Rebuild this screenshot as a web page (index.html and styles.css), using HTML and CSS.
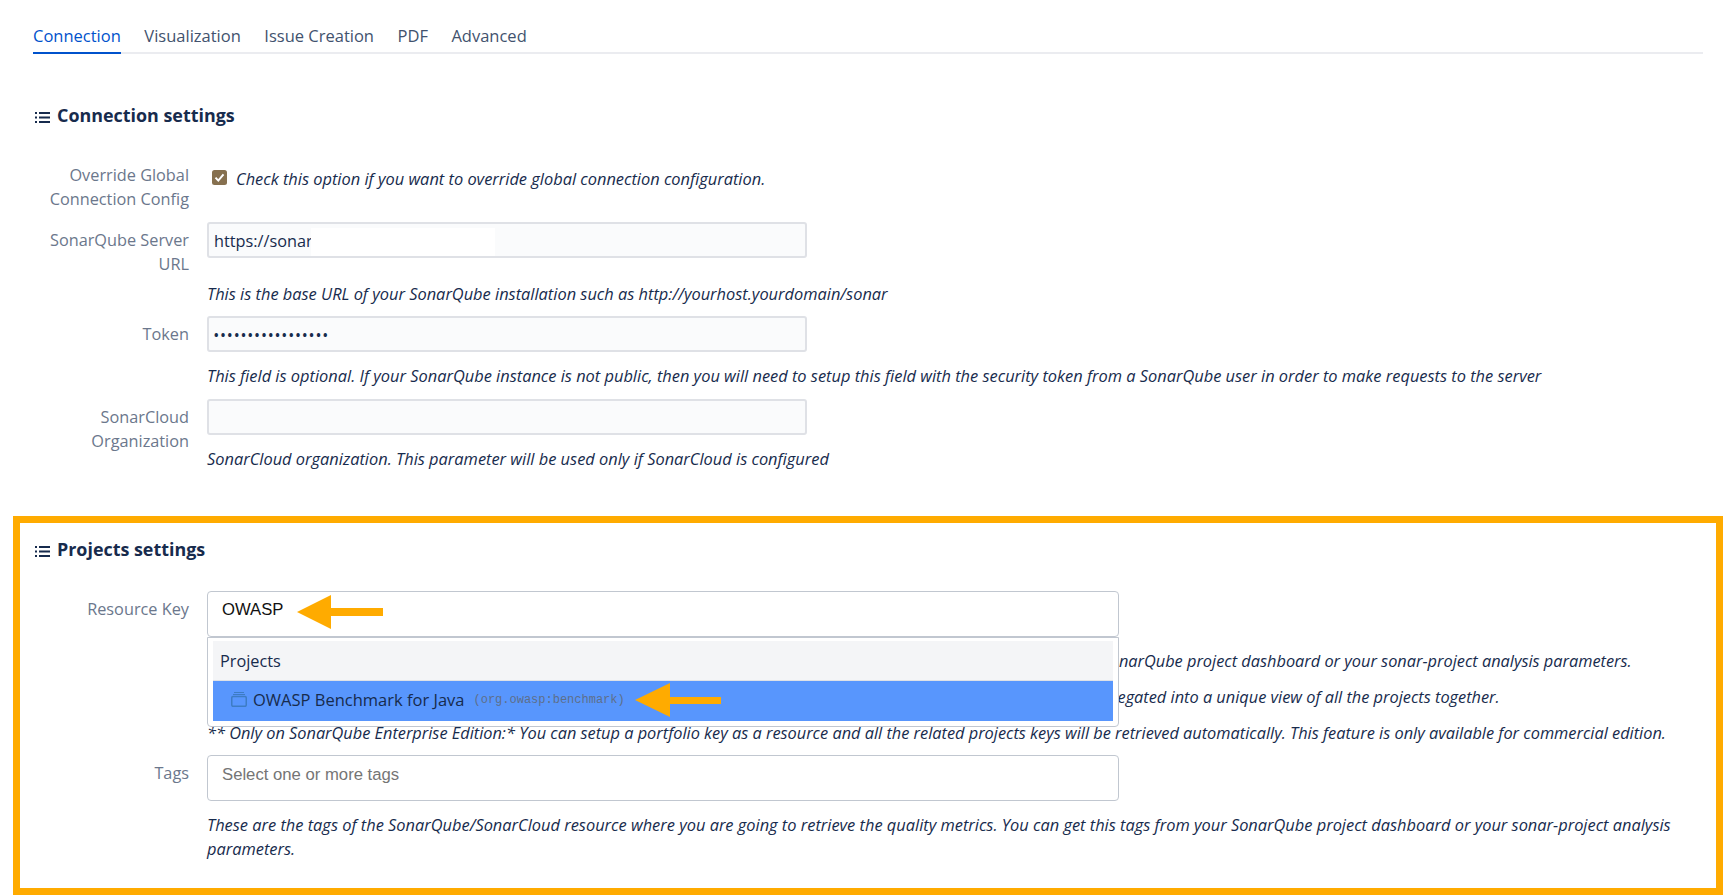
FILE: index.html
```html
<!DOCTYPE html>
<html lang="en">
<head>
<meta charset="utf-8">
<title>SonarQube settings</title>
<link rel="stylesheet" href="styles.css">
</head>
<body>
<nav class="tabs">
  <a class="tab tab-active">Connection</a>
  <a class="tab">Visualization</a>
  <a class="tab">Issue Creation</a>
  <a class="tab">PDF</a>
  <a class="tab">Advanced</a>
</nav>

<section class="section section-connection">
  <h2 class="heading">
    <svg class="heading-icon" viewBox="0 0 15 13" width="15" height="13"><path d="M0 1h2v2H0zM0 5.5h2v2H0zM0 10h2v2H0zM4 1h11v2H4zM4 5.5h11v2H4zM4 10h11v2H4z" fill="#172b4d"/></svg>
    Connection settings
  </h2>
  <div class="row row-first">
    <label class="label">Override Global Connection Config</label>
    <div class="control control-check">
      <svg class="check" viewBox="0 0 15 15" width="15" height="15"><rect width="15" height="15" rx="2.5" fill="#86704f"/><path d="M3.5 7.6l2.8 3L11.5 4.4" fill="none" stroke="#fff" stroke-width="2"/></svg>
      <span class="help help-inline">Check this option if you want to override global connection configuration.</span>
    </div>
  </div>
  <div class="row">
    <label class="label label-field">SonarQube Server URL</label>
    <div class="control">
      <div class="field">https://sonar<span class="redaction"></span></div>
      <p class="help help-far">This is the base URL of your SonarQube installation such as http://yourhost.yourdomain/sonar</p>
    </div>
  </div>
  <div class="row row-token">
    <label class="label label-field">Token</label>
    <div class="control">
      <div class="field field-dots">•••••••••••••••••</div>
      <p class="help">This field is optional. If your SonarQube instance is not public, then you will need to setup this field with the security token from a SonarQube user in order to make requests to the server</p>
    </div>
  </div>
  <div class="row">
    <label class="label label-field">SonarCloud Organization</label>
    <div class="control">
      <div class="field"></div>
      <p class="help">SonarCloud organization. This parameter will be used only if SonarCloud is configured</p>
    </div>
  </div>
</section>

<section class="section section-projects">
  <h2 class="heading">
    <svg class="heading-icon" viewBox="0 0 15 13" width="15" height="13"><path d="M0 1h2v2H0zM0 5.5h2v2H0zM0 10h2v2H0zM4 1h11v2H4zM4 5.5h11v2H4zM4 10h11v2H4z" fill="#172b4d"/></svg>
    Projects settings
  </h2>
  <div class="row row-resource">
    <label class="label label-select">Resource Key</label>
    <div class="control control-select">
      <div class="select select-open">OWASP</div>
      <svg class="arrow arrow-input" viewBox="0 0 86 34" width="86" height="34"><path d="M0 17L34 0V13H86V21H34V34Z" fill="#ffab00"/></svg>
      <div class="menu">
        <div class="menu-head">Projects</div>
        <div class="menu-item">
          <svg class="menu-icon" viewBox="0 0 16 15" width="16" height="15"><path d="M3 .5h10M2 2.5h12" fill="none" stroke="#3d7cc4" stroke-width="1"/><rect x=".75" y="4.5" width="14.5" height="9.8" rx="1.2" fill="none" stroke="#3d7cc4" stroke-width="1.5"/></svg>
          <span class="menu-name">OWASP Benchmark for Java</span>
          <code class="menu-key">(org.owasp:benchmark)</code>
        </div>
      </div>
      <svg class="arrow arrow-menu" viewBox="0 0 86 34" width="86" height="34"><path d="M0 17L35 0V14H86V21H35V34Z" fill="#ffab00"/></svg>
      <p class="help help-tight">This is the resource key of the SonarQube project or portfolio that is going to be used for this. You can get this key from your SonarQube project dashboard or your sonar-project analysis parameters.</p>
      <p class="help help-tight">* You can also setup an application key as resource on Developer Edition, so that the metrics of all its projects will now be aggregated into a unique view of all the projects together.</p>
      <p class="help help-tight">** Only on SonarQube Enterprise Edition:* You can setup a portfolio key as a resource and all the related projects keys will be retrieved automatically. This feature is only available for commercial edition.</p>
    </div>
  </div>
  <div class="row">
    <label class="label label-select">Tags</label>
    <div class="control control-select">
      <div class="select select-placeholder">Select one or more tags</div>
      <p class="help">These are the tags of the SonarQube/SonarCloud resource where you are going to retrieve the quality metrics. You can get this tags from your SonarQube project dashboard or your sonar-project analysis parameters.</p>
    </div>
  </div>
</section>
</body>
</html>
```
FILE: styles.css
```css
* { box-sizing: border-box; }
html, body { margin: 0; padding: 0; background: #fff; }
body {
  width: 1724px;
  height: 896px;
  overflow: hidden;
  font-family: "Open Sans", "Noto Sans", sans-serif;
  font-size: 16.3px;
  line-height: 24px;
  color: #172b4d;
}
.tabs {
  display: flex;
  gap: 23.5px;
  margin: 0 21px 0 33px;
  padding-top: 24px;
  border-bottom: 2px solid #ebecf0;
  height: 54px;
  font-size: 16.5px;
}
.tab { color: #42526e; height: 30px; }
.tab-active { color: #0052cc; border-bottom: 2px solid #0052cc; }
.section-connection { padding: 47px 0 0 33px; height: 462px; }
.section-projects {
  margin-left: 13px;
  width: 1710px;
  height: 379px;
  border: 7px solid #ffab00;
  padding: 12px 0 0 13px;
}
.heading {
  display: flex;
  align-items: center;
  gap: 7px;
  margin: 0 0 28px;
  font-size: 17.9px;
  line-height: 28px;
  font-weight: 700;
  color: #172b4d;
}
.heading-icon { margin: 4px 0 0 2px; }
.section-connection .heading { margin-bottom: 34px; }
.row {
  display: grid;
  grid-template-columns: 156px 1fr;
  column-gap: 18px;
  margin-bottom: 11px;
}
.row-first { margin-bottom: 12px; }
.row-token { margin-bottom: 12px; }
.row-resource { margin-bottom: 10px; }
.label { color: #6b778c; text-align: right; font-weight: 500; }
.label-field { padding-top: 5px; }
.label-select { padding-top: 6px; }
.control { position: relative; min-width: 0; }
.control-check { display: flex; gap: 9px; padding-top: 4px; align-items: flex-start; }
.check { margin: 3px 0 0 5px; flex: none; }
.help { margin: 12px 0 0; padding-right: 30px; font-size: 16.4px; font-style: italic; color: #172b4d; }
.help-inline { margin: 0; padding: 0; }
.help-far { margin-top: 24px; }
.help-tight { font-size: 16.33px; padding-right: 0; }
.field {
  position: relative;
  width: 600px;
  height: 36px;
  margin-top: -1px;
  padding: 0 5px;
  line-height: 35px;
  background: #fafbfc;
  border: 2px solid #dfe1e6;
  border-radius: 3px;
}
.field-dots { letter-spacing: 2.3px; font-size: 12px; font-weight: 700; }
.redaction {
  position: absolute;
  left: 102px;
  top: 4px;
  width: 184px;
  height: 28px;
  background: #fff;
}
.select {
  width: 912px;
  height: 46px;
  padding: 0 14px;
  font-family: "Liberation Sans", Arial, sans-serif;
  font-size: 16.7px;
  line-height: 35px;
  color: #111;
  background: #fff;
  border: 1px solid #c1c7d0;
  border-radius: 4px;
}
.select-placeholder { color: #757575; line-height: 37px; }
.arrow { position: absolute; }
.arrow-input { left: 90px; top: 4px; }
.arrow-menu { left: 428px; top: 92px; z-index: 3; }
.menu {
  position: absolute;
  z-index: 2;
  left: 0;
  top: 46px;
  width: 912px;
  height: 90px;
  padding: 3px 5px 6px;
  background: #fff;
  border: 1px solid #c1c7d0;
  border-radius: 0 0 4px 4px;
}
.menu-head {
  height: 40px;
  padding: 8px 7px 6px;
  background: #f4f5f7;
  border-bottom: 1px solid #dfe1e6;
  font-weight: 500;
}
.menu-item {
  display: flex;
  align-items: center;
  height: 40px;
  padding: 0 0 3px 18px;
  background: #5896fd;
}
.menu-icon { margin-right: 6px; }
.menu-name { font-size: 16.5px; font-weight: 500; }
.menu-key {
  margin-left: 9px;
  font-family: "Liberation Mono", monospace;
  font-size: 12px;
  color: #5e6f8a;
}
```
